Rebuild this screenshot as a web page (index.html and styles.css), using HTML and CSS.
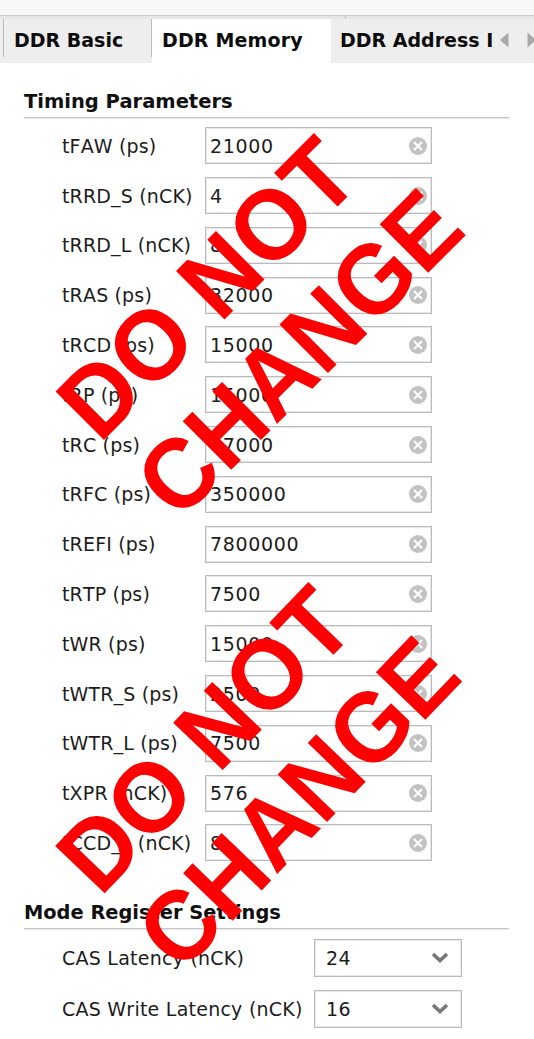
FILE: index.html
```
<!DOCTYPE html>
<html lang="en">
<head>
<meta charset="utf-8">
<title>DDR Memory</title>
<link rel="stylesheet" href="styles.css">
</head>
<body>
<div class="window">
  <div class="topbar"></div>
  <div class="tabs">
    <div class="tab first"><span>DDR Basic</span></div>
    <div class="tab active"><span>DDR Memory</span></div>
    <div class="tab last"><span>DDR Address I</span></div>
    <svg class="arrows" width="34" height="43" viewBox="0 0 34 43"><path d="M8.500 13.500v15L0 21zM27.500 13.500v15L36 21z" fill="#a8a8a8"/></svg>
  </div>
  <main class="panel">
    <h2 class="heading">Timing Parameters</h2>
    <div class="fields" id="fields"></div>
    <h2 class="heading mode">Mode Register Settings</h2>
    <div class="selects">
      <div class="choice"><span class="label">CAS Latency (nCK)</span><div class="select"><span>24</span><svg width="18" height="12" viewBox="0 0 18 12"><path d="M2 2l7 6.500 7-6.500" fill="none" stroke="#777" stroke-width="3.500"/></svg></div></div>
      <div class="choice"><span class="label">CAS Write Latency (nCK)</span><div class="select"><span>16</span><svg width="18" height="12" viewBox="0 0 18 12"><path d="M2 2l7 6.500 7-6.500" fill="none" stroke="#777" stroke-width="3.500"/></svg></div></div>
    </div>
  </main>
  <svg class="stamp" width="534" height="1039" viewBox="0 0 534 1039">
    <text transform="translate(99.500 444.500) rotate(-45)" textLength="373" lengthAdjust="spacingAndGlyphs">DO NOT</text>
    <text transform="translate(178.500 522.500) rotate(-45)" textLength="410" lengthAdjust="spacingAndGlyphs">CHANGE</text>
    <text transform="translate(100.300 897.900) rotate(-46.200)" textLength="373" lengthAdjust="spacingAndGlyphs">DO NOT</text>
    <text transform="translate(181 974.500) rotate(-46.200)" textLength="410" lengthAdjust="spacingAndGlyphs">CHANGE</text>
  </svg>
</div>
<script src="fields.js"></script>
</body>
</html>
```
FILE: styles.css
```
* { box-sizing: border-box; }
body { margin: 0; background: #fff; font-family: "DejaVu Sans", sans-serif; color: #1c1c1c; }
.window { position: relative; width: 534px; height: 1039px; overflow: hidden; }
.topbar { height: 16px; background: #f7f7f7; border-bottom: 1px solid #cacaca; }
.tabs { display: flex; height: 47px; padding-top: 3px; background: linear-gradient(#c4c4c4, #c4c4c4) 345px 0 / 1px 3px no-repeat, linear-gradient(#e6e6e6, #e6e6e6) 0 0 / 100% 3px no-repeat, #eee; font-size: 19px; font-weight: bold; color: #0c0c0c; line-height: 43px; white-space: nowrap; }
.tab { height: 44px; padding-left: 10px; }
.first { width: 148px; padding-left: 11px; margin-left: 3px; background: linear-gradient(#bbb, #bbb) 0 0 / 1px 38px no-repeat; }
.active { width: 180px; padding-left: 11px; letter-spacing: .15px; background: linear-gradient(#bbb, #bbb) 0 0 / 1px 38px no-repeat, linear-gradient(#fff, #fff) 1px 0 no-repeat; }
.last { width: 168px; padding-left: 9px; overflow: hidden; }
.arrows { flex: none; margin-left: 1px; }
.panel { padding: 22px 25px 0 24px; }
.heading { margin: 0; height: 33px; border-bottom: 1px solid #c6c6c6; box-shadow: 0 1px #e8e8e8; font-size: 19.5px; line-height: 33px; color: #101010; white-space: nowrap; }
.fields { padding-top: 2.9px; }
.field, .choice { display: flex; align-items: center; height: 49.8px; padding-left: 38px; font-size: 19px; font-kerning: none; white-space: nowrap; }
.label { width: 143px; flex: none; letter-spacing: .24px; }
.field .label { letter-spacing: .16px; }
.input { display: flex; align-items: center; justify-content: space-between; width: 227px; height: 37px; padding: 0 3px 0 4px; border: 1px solid #bbb; box-shadow: inset 0 0 0 1px #e8e8e8; letter-spacing: .65px; }
.mode { margin-top: 28px; font-size: 19.4px; }
.mode + .selects { padding-top: 4px; }
.choice { height: 51px; }
.choice .label { width: 252px; }
.select { display: flex; align-items: center; justify-content: space-between; width: 148px; height: 38px; padding: 0 12px 0 11px; border: 1px solid #bbb; box-shadow: inset 0 0 0 1px #e8e8e8; letter-spacing: .3px; }
.stamp { position: absolute; left: 0; top: 0; pointer-events: none; }
.stamp text { font: bold 99.7px "Liberation Sans", Arial, sans-serif; fill: #f00; }
```
FILE: fields.js
```
const fields = [
  ["tFAW (ps)", "21000"],
  ["tRRD_S (nCK)", "4"],
  ["tRRD_L (nCK)", "8"],
  ["tRAS (ps)", "32000"],
  ["tRCD (ps)", "15000"],
  ["tRP (ps)", "15000"],
  ["tRC (ps)", "47000"],
  ["tRFC (ps)", "350000"],
  ["tREFI (ps)", "7800000"],
  ["tRTP (ps)", "7500"],
  ["tWR (ps)", "15000"],
  ["tWTR_S (ps)", "2500"],
  ["tWTR_L (ps)", "7500"],
  ["tXPR (nCK)", "576"],
  ["tCCD_L (nCK)", "8"]
];
const clearIcon = '<svg width="20" height="20" viewBox="0 0 20 20"><circle cx="10" cy="10" r="9" fill="#c2c2c2"/><path d="M6 6l8 8M14 6l-8 8" stroke="#fff" stroke-width="2.2"/></svg>';
document.getElementById("fields").innerHTML = fields.map(([name, value]) =>
  `<div class="field"><span class="label">${name}</span><div class="input"><span>${value}</span>${clearIcon}</div></div>`
).join("");
```
